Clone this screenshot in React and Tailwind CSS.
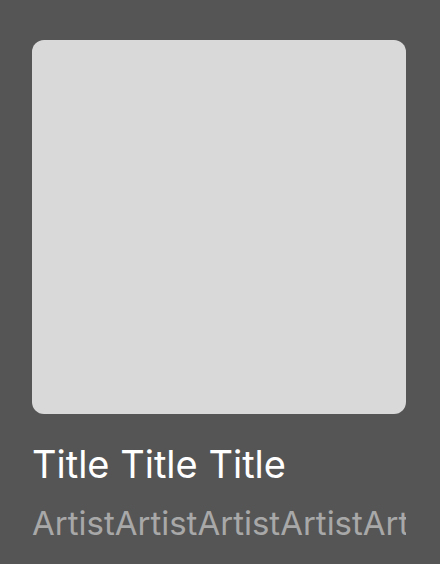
import React from 'react';

export default function App() {
  return (
    <div className="w-[440px] h-[564px] bg-[#555555] pt-10 pl-8 font-['Inter',sans-serif]">
      <div className="w-[374px]">
        <div className="w-[374px] h-[374px] rounded-xl bg-[#d9d9d9]" />
        <div className="mt-[27px] text-[38px] leading-[46px] text-white whitespace-nowrap">Title Title Title</div>
        <div className="mt-[16px] text-[33px] leading-[40px] text-[#a8a8a8] whitespace-nowrap overflow-hidden">
          ArtistArtistArtistArtistArtist
        </div>
      </div>
    </div>
  );
}
